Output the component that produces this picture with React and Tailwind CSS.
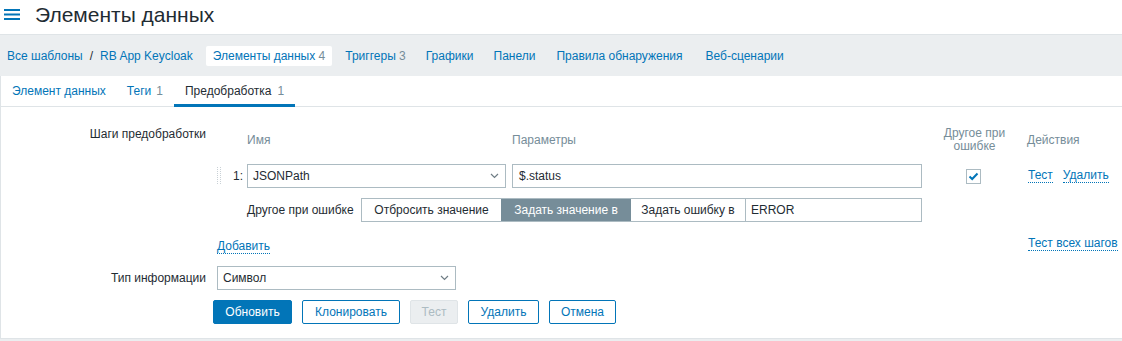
import React from 'react'

const link = "text-[#0275b8]"
const dotted = "text-[#0275b8] border-b border-dotted border-[#0275b8] leading-[13px]"

function Chevron() {
    return (
        <svg width="9" height="6" viewBox="0 0 9 6" className="shrink-0">
            <path d="M1 1 L4.5 4.5 L8 1" fill="none" stroke="#6f7d85" strokeWidth="1.2" />
        </svg>
    )
}

function DragHandle() {
    const dots = []
    for (let r = 0; r < 9; r++) {
        dots.push(<rect key={'a' + r} x="0" y={r * 2} width="1" height="1" fill="#c9d1d6" />)
        dots.push(<rect key={'b' + r} x="3" y={r * 2} width="1" height="1" fill="#c9d1d6" />)
    }
    return (
        <svg width="4" height="18" viewBox="0 0 4 18">{dots}</svg>
    )
}

function NavBar() {
    return (
        <div className="h-[42px] bg-[#ebeef0] border-t border-[#dfe4e7] flex items-start pt-[11px]">
            <a className={link + " ml-[7px] leading-[20px]"}>Все шаблоны</a>
            <span className="mx-[7px] leading-[20px] text-[#1f2c33]">/</span>
            <a className={link + " leading-[20px]"}>RB App Keycloak</a>
            <div className="ml-[13px] flex gap-[6px]">
                <a className={link + " px-[7px] h-[20px] leading-[20px] bg-white rounded-[2px]"}>
                    Элементы данных <span className="text-[#768d99]">4</span>
                </a>
                <a className={link + " px-[7px] leading-[20px]"}>
                    Триггеры <span className="text-[#768d99]">3</span>
                </a>
                <a className={link + " px-[7px] leading-[20px]"}>Графики</a>
                <a className={link + " px-[7px] leading-[20px]"}>Панели</a>
                <a className={link + " px-[7px] leading-[20px] ml-[1px]"}>Правила обнаружения</a>
                <a className={link + " px-[7px] leading-[20px] ml-[3px]"}>Веб-сценарии</a>
            </div>
        </div>
    )
}

function Tabs() {
    return (
        <div className="h-[31px] border-b border-[#dfe4e7] flex">
            <a className={link + " pl-[11px] pr-[10px] h-[30px] flex items-center"}>Элемент данных</a>
            <a className={link + " px-[11px] h-[30px] flex items-center"}>
                Теги<span className="ml-[5px] text-[#768d99]">1</span>
            </a>
            <a className="px-[11px] h-[31px] pb-[1px] flex items-center text-[#1f2c33] shadow-[inset_0_-3px_0_#0275b8]">
                Предобработка<span className="ml-[6px] text-[#768d99]">1</span>
            </a>
        </div>
    )
}

function StepsTable() {
    return (
        <div className="flex flex-col">
            {/* Header */}
            <div className="flex h-[26px] items-center text-[#768d99]">
                <div className="w-[30px]" />
                <div className="w-[265px]">Имя</div>
                <div className="w-[410px]">Параметры</div>
                <div className="w-[105px] text-center leading-[13px]">Другое при<br />ошибке</div>
                <div className="w-[95px]">Действия</div>
            </div>

            {/* Step 1 */}
            <div className="flex h-[24px] items-center mt-[11px]">
                <div className="w-[15px] flex items-center"><DragHandle /></div>
                <div className="w-[15px] pl-[1px]">1:</div>
                <div className="w-[265px]">
                    <div className="w-[259px] h-[24px] border border-[#acbbc2] flex items-center justify-between pl-[5px] pr-[6px]">
                        <span>JSONPath</span>
                        <Chevron />
                    </div>
                </div>
                <div className="w-[410px] h-[24px] border border-[#acbbc2] flex items-center px-[6px]">$.status</div>
                <div className="w-[105px] flex justify-center pr-[3px]">
                    <div className="w-[15px] h-[15px] border border-[#acbbc2] bg-white flex items-center justify-center">
                        <svg width="11" height="9" viewBox="0 0 11 9">
                            <path d="M1.5 4.5 L4.2 7 L9.5 1.5" fill="none" stroke="#0275b8" strokeWidth="2" />
                        </svg>
                    </div>
                </div>
                <div className="w-[95px] flex gap-[10px] pl-[1px]">
                    <a className={dotted}>Тест</a>
                    <a className={dotted}>Удалить</a>
                </div>
            </div>

            {/* Step 1 error handler */}
            <div className="flex h-[24px] items-center mt-[10px]">
                <div className="w-[30px]" />
                <div className="w-[114px]">Другое при ошибке</div>
                <div className="flex h-[24px] border border-[#acbbc2] w-[561px]">
                    <div className="w-[139px] flex items-center justify-center bg-white">Отбросить значение</div>
                    <div className="w-[130px] flex items-center justify-center bg-[#768d99] text-white">Задать значение в</div>
                    <div className="w-[115px] flex items-center justify-center bg-white border-r border-[#acbbc2]">Задать ошибку в</div>
                    <div className="flex-1 flex items-center px-[5px]">ERROR</div>
                </div>
            </div>

            <div className="flex mt-[15px] h-[14px] items-start">
                <div className="w-[810px]">
                    <a className={dotted}>Добавить</a>
                </div>
                <a className={dotted + " ml-[1px]"}>Тест всех шагов</a>
            </div>
        </div>
    )
}

function Button({ label, variant, width }) {
    const styles = {
        primary: "bg-[#0275b8] border-[#0275b8] text-white",
        outline: "bg-white border-[#0275b8] text-[#0275b8]",
        disabled: "bg-[#ebeef0] border-[#dfe4e7] text-[#acbbc2]",
    }
    return (
        <button className={"h-[24px] border rounded-[2px] flex items-center justify-center " + width + " " + styles[variant]}>
            {label}
        </button>
    )
}

export default function App() {
    return (
        <div className="w-[1122px] h-[341px] overflow-hidden bg-[#ebeef0] font-['Liberation_Sans',Arial,sans-serif] text-[12px] text-[#1f2c33]">
            <div className="bg-white">
                {/* Title */}
                <div className="h-[34px]">
                    <div className="h-[28px] flex items-center pl-[4px]">
                        <svg width="16" height="11" viewBox="0 0 16 11">
                            <rect x="0" y="0" width="16" height="2" fill="#0275b8" />
                            <rect x="0" y="4.5" width="16" height="2" fill="#0275b8" />
                            <rect x="0" y="9" width="16" height="2" fill="#0275b8" />
                        </svg>
                        <h1 className="ml-[15px] text-[21px] leading-[21px] text-[#1f2c33]">Элементы данных</h1>
                    </div>
                </div>

                <NavBar />
            </div>

            {/* Content */}
            <div className="bg-white border-l border-b border-[#dfe4e7] h-[263px]">
                <Tabs />

                <div className="pt-[20px] flex flex-col">
                    <div className="flex">
                        <div className="w-[205px] text-right leading-[14px]">Шаги предобработки</div>
                        <div className="ml-[11px]">
                            <StepsTable />
                        </div>
                    </div>

                    <div className="flex items-center mt-[15px]">
                        <div className="w-[205px] text-right">Тип информации</div>
                        <div className="ml-[11px] w-[239px] h-[24px] border border-[#acbbc2] flex items-center justify-between pl-[5px] pr-[6px]">
                            <span>Символ</span>
                            <Chevron />
                        </div>
                    </div>

                    <div className="flex gap-[10px] mt-[10px] ml-[212px]">
                        <Button label="Обновить" variant="primary" width="w-[79px]" />
                        <Button label="Клонировать" variant="outline" width="w-[98px]" />
                        <Button label="Тест" variant="disabled" width="w-[48px]" />
                        <Button label="Удалить" variant="outline" width="w-[71px]" />
                        <Button label="Отмена" variant="outline" width="w-[67px]" />
                    </div>
                </div>
            </div>
        </div>
    )
}
